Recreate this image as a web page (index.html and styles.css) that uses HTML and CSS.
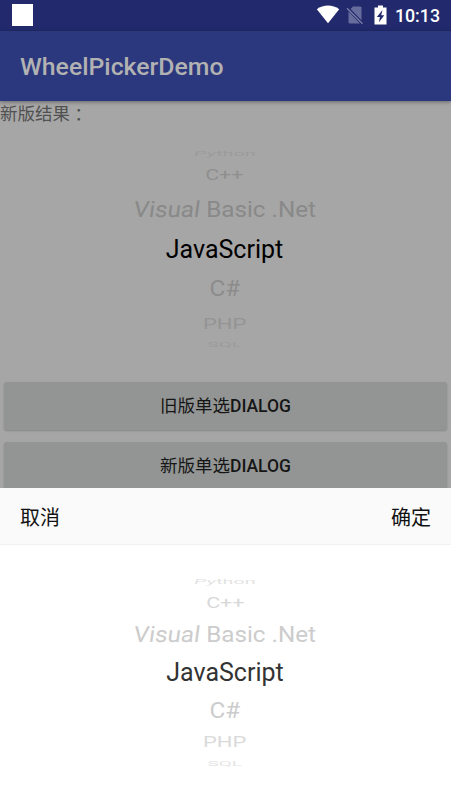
FILE: index.html
```html
<!DOCTYPE html>
<html lang="zh">
<head>
<meta charset="utf-8">
<title>WheelPickerDemo</title>
<link rel="stylesheet" href="styles.css">
</head>
<body>
<div class="screen">
  <div class="status">
    <i class="square"></i>
    <div class="icons">
      <svg class="wifi" width="24" height="19" viewBox="0 0 24 19"><path fill="#fff" d="M.8 4.2C7.3-.7 16.700-.7 23.200 4.200L12 18.200Z"/></svg>
      <svg class="sim" width="18" height="19" viewBox="0 0 18 19"><path fill="#666c9c" d="M4.500 3 7 .500h7.500l1 1v13Z"/><path fill="#666c9c" d="M2.500 5.500 14 17.500H3.500L2.500 16.500Z"/><path stroke="#222a6d" stroke-width="1" d="M2.500 2 17 16.500"/><path stroke="#7a7fa8" stroke-width="1.300" d="M1 2.300 16.500 17.800"/></svg>
      <svg class="battery" width="13" height="20" viewBox="0 0 13 20"><path fill="#fff" d="M4 .5h5v2h3.500v17H.5v-17H4Z"/><path fill="#222a6d" d="M8.500 5 2.800 11.900h3.100L5 17.200l5.300-7H7.200Z"/></svg>
    </div>
    <span class="time">10:13</span>
  </div>
  <header class="appbar">WheelPickerDemo</header>
  <main class="page">
    <p class="result">新版结果<span class="colon" lang="zh-TW">：</span></p>
    <div class="wheel wheel-main">
      <div class="row r1"><span><em>Py</em>thon</span></div>
      <div class="row r2"><span>C++</span></div>
      <div class="row r3"><span><em>Visual</em> Basic .Net</span></div>
      <div class="row r4"><span>JavaScript</span></div>
      <div class="row r5"><span>C#</span></div>
      <div class="row r6"><span>PHP</span></div>
      <div class="row r7"><span>SQL</span></div>
    </div>
    <div class="buttons">
      <button><span class="han">旧版单选</span>DIALOG</button>
      <button><span class="han">新版单选</span>DIALOG</button>
    </div>
  </main>
  <section class="sheet">
    <div class="actions"><span>取消</span><span>确定</span></div>
    <div class="wheel wheel-sheet">
      <div class="row r1"><span><em>Py</em>thon</span></div>
      <div class="row r2"><span>C++</span></div>
      <div class="row r3"><span><em>Visual</em> Basic .Net</span></div>
      <div class="row r4"><span>JavaScript</span></div>
      <div class="row r5"><span>C#</span></div>
      <div class="row r6"><span>PHP</span></div>
      <div class="row r7"><span>SQL</span></div>
    </div>
  </section>
</div>
</body>
</html>
```
FILE: styles.css
```css
* { box-sizing: border-box; }
body { margin: 0; font-family: Roboto, "Noto Sans CJK SC", sans-serif; }
.screen { display: flex; flex-direction: column; width: 451px; height: 801px; overflow: hidden; background: #a6a6a6; }
.status { display: flex; flex: none; height: 31px; padding: 4px 11px 0 12px; background: #222a6d; color: #fff; }
.square { width: 21px; height: 22px; background: #fff; }
.icons { display: flex; margin-left: auto; }
.wifi { margin: 1px 6px 0 0; }
.sim { margin: 2px 10px 0 0; }
.battery { margin: 1px 8px 0 0; }
.time { font-size: 17.800px; line-height: 24px; font-weight: 500; }
.appbar { flex: none; height: 70px; padding-left: 20px; line-height: 72px; background: #2c387e; color: #b2b2b2; font-size: 24.800px; font-weight: 500; box-shadow: 0 1px 4px rgba(0,0,0,.4); z-index: 1; }
.page { flex: none; height: 387px; overflow: hidden; }
.result { display: flex; margin: 0; height: 25px; line-height: 26px; font-size: 17.500px; color: #515151; }
.colon { font-family: "Noto Sans CJK TC", sans-serif; }
.wheel { display: flex; flex-direction: column; padding-right: 2px; font-size: 25px; line-height: 1; }
.wheel-main { height: 252px; padding-top: 23px; }
.row { display: flex; flex: none; align-items: center; justify-content: center; white-space: nowrap; }
.row span { display: block; }
.row em { display: inline-block; font-style: normal; transform: skewX(-7deg); }
.wheel-main .r1 { height: 8.800px; color: #9b9b9b; }
.wheel-main .r2 { height: 34.200px; color: #8f8f8f; }
.wheel-main .r3 { height: 35.200px; color: #898989; }
.wheel-main .r4 { height: 44px; color: #000; }
.wheel-main .r5 { height: 34.400px; color: #8c8c8c; }
.wheel-main .r6 { height: 35.600px; color: #949494; }
.wheel-main .r7 { height: 6.800px; color: #9b9b9b; }
.r1 span { transform: scale(.79, .28); }
.r2 span { transform: scale(.86, .62); }
.r3 span { transform: scale(.97, .89); }
.r5 span { transform: scale(.97, .87); }
.r6 span { transform: scale(.88, .62); }
.r7 span { transform: scale(.76, .27); }
.buttons { display: flex; flex-direction: column; gap: 12px; padding: 4px 4px 0; }
.buttons button { height: 48px; border: 0; border-radius: 3px; background: #939594; color: #161616; font: 500 17.500px/48px Roboto, "Noto Sans CJK SC", sans-serif; padding: 0; box-shadow: 0 1px 2px rgba(0,0,0,.2); }
.han { font-weight: 400; }
.sheet { flex: 1; background: #fff; }
.actions { display: flex; justify-content: space-between; height: 57px; padding: 0 20px; border-bottom: 1px solid #f1f1f1; background: #fafafa; font-size: 20px; line-height: 60px; color: #111; }
.wheel-sheet { padding: 30px 1px 0 0; }
.wheel-sheet .r1 { height: 12px; color: #e3e3e3; }
.wheel-sheet .r2 { height: 31px; color: #d8d8d8; }
.wheel-sheet .r3 { height: 32px; color: #ccc; }
.wheel-sheet .r4 { height: 44px; color: #333; }
.wheel-sheet .r5 { height: 32px; color: #ccc; }
.wheel-sheet .r6 { height: 31.600px; color: #dadada; }
.wheel-sheet .r7 { height: 11.800px; color: #e5e5e5; }
```
